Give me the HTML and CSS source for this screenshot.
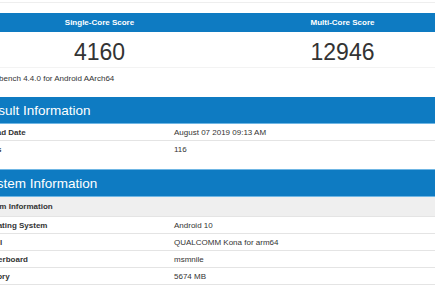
FILE: index.html
```html
<!DOCTYPE html>
<html lang="en">
<head>
  <meta charset="UTF-8" />
  <title>Geekbench Result</title>
  <link rel="stylesheet" href="styles.css">
</head>
<body>
  <div class="page">
    <div class="top-rule"></div>

    <div class="scores">
      <div class="score-head">
        <div>Single-Core Score</div>
        <div>Multi-Core Score</div>
      </div>
      <div class="score-body">
        <div>4160</div>
        <div>12946</div>
      </div>
    </div>
    <p class="platform">Geekbench 4.4.0 for Android AArch64</p>

    <section class="info result">
      <h3>Result Information</h3>
      <div class="row"><span class="label">Upload Date</span><span>August 07 2019 09:13 AM</span></div>
      <div class="row last"><span class="label">Views</span><span>116</span></div>
    </section>

    <section class="info system">
      <h3>System Information</h3>
      <div class="row sub"><span class="label">System Information</span><span></span></div>
      <div class="row"><span class="label">Operating System</span><span>Android 10</span></div>
      <div class="row"><span class="label">Model</span><span>QUALCOMM Kona for arm64</span></div>
      <div class="row"><span class="label">Motherboard</span><span>msmnile</span></div>
      <div class="row"><span class="label">Memory</span><span>5674 MB</span></div>
    </section>
  </div>
</body>
</html>
```

FILE: styles.css
```css
body {
  margin: 0;
  overflow: hidden;
  font-family: "Liberation Sans", Arial, sans-serif;
  color: #333;
  background: #fff;
}
.page {
  margin-left: -22px;
  width: 486px;
}
.top-rule {
  height: 1px;
  margin-top: 2px;
  background: #eee;
}
.scores {
  margin-top: 10px;
  border-bottom: 1px solid #f3f3f3;
}
.score-head,
.score-body {
  display: grid;
  grid-template-columns: 1fr 1fr;
  align-items: center;
  text-align: center;
}
.score-head {
  height: 19px;
  background: #0e7bc2;
  color: #fff;
  font-weight: bold;
  font-size: 8px;
}
.score-body {
  height: 35px;
  padding-top: 5px;
  box-sizing: border-box;
  font-size: 23px;
  color: #333;
}
.platform {
  margin: 5px 0 0;
  padding-left: 2px;
  font-size: 8px;
  line-height: 11px;
}
.info h3 {
  margin: 0;
  height: 26px;
  line-height: 27px;
  padding-left: 3px;
  background: #0e7bc2;
  border-bottom: 1px solid #6fb6e4;
  color: #fff;
  font-size: 13.5px;
  font-weight: normal;
}
.result {
  margin-top: 13px;
}
.system {
  margin-top: 11px;
  border-top: 1px solid #6fb6e4;
}
.row {
  display: grid;
  grid-template-columns: 195px 1fr;
  height: 16px;
  line-height: 18px;
  font-size: 8px;
  border-bottom: 1px solid #e4e4e4;
}
.row span {
  padding-left: 1px;
}
.row .label {
  font-weight: bold;
}
.row.last {
  border-bottom-color: transparent;
}
.row.sub {
  height: 19px;
  line-height: 19px;
  background: #efefef;
}
.row.sub .label {
  padding-left: 0;
}
```
